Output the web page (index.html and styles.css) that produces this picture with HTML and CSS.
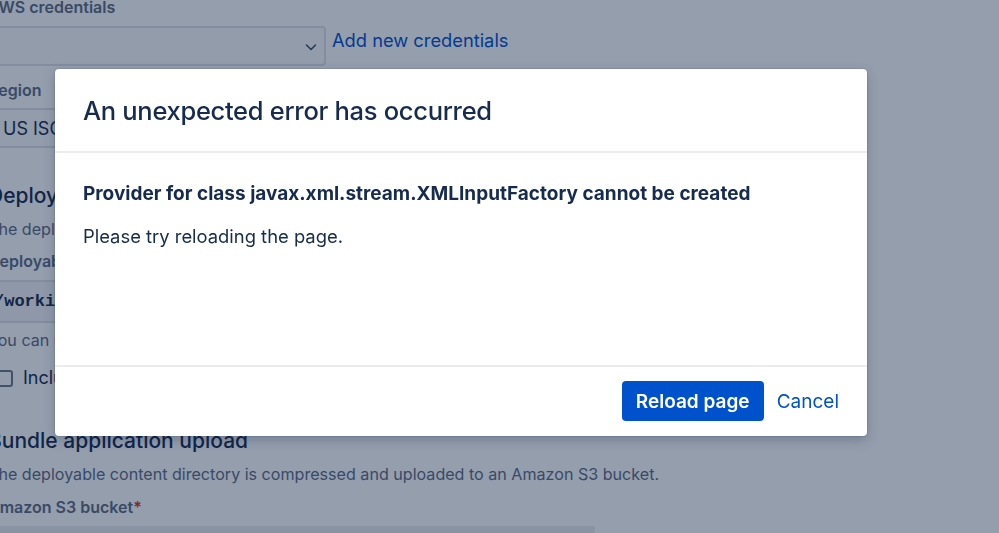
FILE: index.html
```html
<!DOCTYPE html>
<html>
<head>
<meta charset="utf-8">
<link rel="stylesheet" href="styles.css">
</head>
<body>
<div class="page">
  <div class="label">AWS credentials</div>
  <div class="row">
    <div class="select wide">
      <svg class="chev" width="14" height="14" viewBox="0 0 14 14"><path d="M2.5 5l4.5 4.5L11.5 5" fill="none" stroke="#42526e" stroke-width="1.6" stroke-linecap="round" stroke-linejoin="round"/></svg>
    </div>
    <a class="link">Add new credentials</a>
  </div>
  <div class="label gap-region">Region</div>
  <div class="select region"><span>US ISO East (Ohio)</span></div>
  <h2 class="heading gap-deploy">Deployable content directory</h2>
  <p class="desc gap-desc">The deployable content directory is the working directory of the plan.</p>
  <div class="label gap-dlabel">Deployable content directory</div>
  <div class="code"><span>/working-directory/target</span></div>
  <p class="desc gap-you">You can use a relative path from the working directory.</p>
  <div class="check gap-check"><span class="box"></span><span>Include all files in the working directory</span></div>
  <h2 class="heading gap-bundle">Bundle application upload</h2>
  <p class="desc gap-desc">The deployable content directory is compressed and uploaded to an Amazon S3 bucket.</p>
  <div class="label gap-s3">Amazon S3 bucket<span class="req">*</span></div>
  <div class="input"></div>
</div>

<div class="overlay"></div>

<div class="modal" role="dialog">
  <div class="modal-header">
    <h1 class="modal-title">An unexpected error has occurred</h1>
  </div>
  <div class="modal-body">
    <p class="err">Provider for class javax.xml.stream.XMLInputFactory cannot be created</p>
    <p class="hint">Please try reloading the page.</p>
  </div>
  <div class="modal-footer">
    <button class="btn primary">Reload page</button>
    <button class="btn subtle">Cancel</button>
  </div>
</div>
</body>
</html>
```

FILE: styles.css
```css
* { box-sizing: border-box; }
html, body { margin: 0; padding: 0; }
body {
  width: 999px;
  height: 533px;
  overflow: hidden;
  background: #ffffff;
  font-family: Inter, "Noto Sans", sans-serif;
  color: #172b4d;
}
.page {
  display: flex;
  flex-direction: column;
  align-items: flex-start;
  margin-left: -12px;
  margin-top: -3px;
  width: 1000px;
}
.label {
  font-size: 16px;
  line-height: 20px;
  font-weight: 600;
  color: #5e6c84;
}
.req { color: #de350b; }
.row { display: flex; align-items: center; gap: 6px; margin-top: 9px; }
.select {
  height: 40px;
  border: 2px solid #dfe1e6;
  border-radius: 4px;
  background: #fafbfc;
  display: flex;
  align-items: center;
  justify-content: flex-end;
  padding: 0 6px;
  font-size: 18px;
  color: #172b4d;
}
.select.wide { width: 338px; }
.chev { display: block; margin-top: 2px; }
.link { color: #0052cc; font-size: 18.3px; line-height: 24px; margin-top: -12px; }
.gap-region { margin-top: 14px; }
.select.region { width: 340px; margin-top: 8px; justify-content: flex-start; padding: 0 13px; }
.heading {
  margin: 0;
  font-size: 21px;
  line-height: 28px;
  font-weight: 500;
  color: #172b4d;
}
.gap-deploy { margin-top: 34px; }
.desc {
  margin: 0;
  font-size: 16.1px;
  line-height: 24px;
  color: #5e6c84;
}
.gap-desc { margin-top: 7px; }
.gap-dlabel { margin-top: 10px; }
.code {
  margin-top: 9px;
  width: 500px;
  height: 43px;
  border-top: 2px solid #dfe1e6;
  border-bottom: 2px solid #dfe1e6;
  background: #f4f5f7;
  display: flex;
  align-items: center;
  padding-left: 6px;
  font-family: "Liberation Mono", "DejaVu Sans Mono", monospace;
  font-weight: 700;
  font-size: 17px;
  color: #172b4d;
}
.gap-you { margin-top: 5px; }
.check {
  display: flex;
  align-items: center;
  gap: 10px;
  font-size: 18px;
  line-height: 24px;
  color: #172b4d;
}
.gap-check { margin-top: 14px; margin-left: 8px; }
.box {
  width: 17px;
  height: 17px;
  border: 2px solid #6b778c;
  border-radius: 3px;
  background: #fafbfc;
}
.gap-bundle { margin-top: 37px; }
.gap-s3 { margin-top: 11px; }
.input {
  margin-top: 9px;
  width: 607px;
  height: 40px;
  background: #ebecf0;
  border-radius: 3px;
}

.overlay {
  position: fixed;
  inset: 0;
  background: rgba(9, 30, 66, 0.43);
}
.modal {
  position: fixed;
  top: 69px;
  left: 55px;
  width: 812px;
  height: 367px;
  background: #ffffff;
  border-radius: 4px;
  box-shadow: 0 0 0 1px rgba(9,30,66,0.08), 0 4px 12px rgba(9,30,66,0.25);
  display: flex;
  flex-direction: column;
}
.modal-header {
  padding: 26px 28px 24px;
  border-bottom: 2px solid #ebecf0;
}
.modal-title {
  margin: 0;
  font-size: 25.5px;
  line-height: 32px;
  font-weight: 500;
  color: #172b4d;
  letter-spacing: -0.3px;
}
.modal-body {
  flex: 1;
  padding: 29px 28px 0;
  border-bottom: 2px solid #ebecf0;
}
.err {
  margin: 0;
  font-size: 19px;
  line-height: 24px;
  font-weight: 700;
  color: #172b4d;
}
.hint {
  margin: 18px 0 0;
  font-size: 18.4px;
  line-height: 24px;
  color: #172b4d;
}
.modal-footer {
  display: flex;
  justify-content: flex-end;
  align-items: center;
  gap: 0;
  padding: 14px 14px 15px 28px;
}
.btn {
  height: 40px;
  border: none;
  border-radius: 4px;
  font-family: inherit;
  font-size: 19px;
  padding: 0 14px;
  cursor: pointer;
}
.btn.primary {
  background: #0052cc;
  color: #ffffff;
  font-weight: 600;
  width: 142px;
}
.btn.subtle {
  background: transparent;
  color: #0052cc;
  font-weight: 400;
  padding: 0 14px 0 13px;
}
```
